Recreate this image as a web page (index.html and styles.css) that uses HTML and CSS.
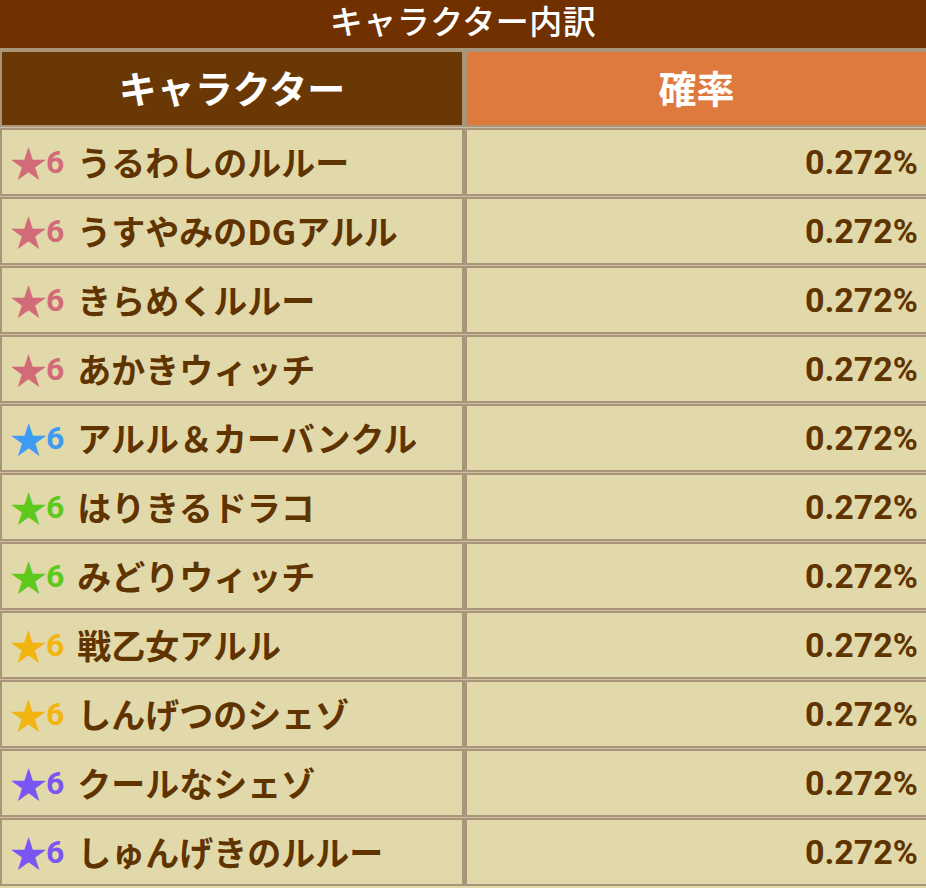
FILE: index.html
```html
<!DOCTYPE html>
<html lang="ja">
<head>
<meta charset="utf-8">
<link rel="stylesheet" href="styles.css">
</head>
<body>
<div class="title">キャラクター内訳</div>
<div class="table">
  <div class="row head">
    <div class="cell name-h">キャラクター</div>
    <div class="cell rate-h">確率</div>
  </div>
  <div class="row"><div class="cell name"><span class="rank pink"><span class="star">★</span>6</span><span class="label">うるわしのルルー</span></div><div class="cell rate">0.272%</div></div>
  <div class="row"><div class="cell name"><span class="rank pink"><span class="star">★</span>6</span><span class="label">うすやみのDGアルル</span></div><div class="cell rate">0.272%</div></div>
  <div class="row"><div class="cell name"><span class="rank pink"><span class="star">★</span>6</span><span class="label">きらめくルルー</span></div><div class="cell rate">0.272%</div></div>
  <div class="row"><div class="cell name"><span class="rank pink"><span class="star">★</span>6</span><span class="label">あかきウィッチ</span></div><div class="cell rate">0.272%</div></div>
  <div class="row"><div class="cell name"><span class="rank blue"><span class="star">★</span>6</span><span class="label">アルル＆カーバンクル</span></div><div class="cell rate">0.272%</div></div>
  <div class="row"><div class="cell name"><span class="rank green"><span class="star">★</span>6</span><span class="label">はりきるドラコ</span></div><div class="cell rate">0.272%</div></div>
  <div class="row"><div class="cell name"><span class="rank green"><span class="star">★</span>6</span><span class="label">みどりウィッチ</span></div><div class="cell rate">0.272%</div></div>
  <div class="row"><div class="cell name"><span class="rank yellow"><span class="star">★</span>6</span><span class="label">戦乙女アルル</span></div><div class="cell rate">0.272%</div></div>
  <div class="row"><div class="cell name"><span class="rank yellow"><span class="star">★</span>6</span><span class="label">しんげつのシェゾ</span></div><div class="cell rate">0.272%</div></div>
  <div class="row"><div class="cell name"><span class="rank purple"><span class="star">★</span>6</span><span class="label">クールなシェゾ</span></div><div class="cell rate">0.272%</div></div>
  <div class="row"><div class="cell name"><span class="rank purple"><span class="star">★</span>6</span><span class="label">しゅんげきのルルー</span></div><div class="cell rate">0.272%</div></div>
</div>
</body>
</html>
```
FILE: styles.css
```css
html, body {
  margin: 0;
  padding: 0;
  background: #e2d9ab;
}
body {
  width: 926px;
  height: 888px;
  overflow: hidden;
  font-family: "Noto Sans CJK JP", "Noto Sans", sans-serif;
}
.title {
  height: 50px;
  background: #703000;
  color: #ffffff;
  font-size: 33px;
  font-weight: 500;
  line-height: 1;
  padding-top: 4px;
  text-align: center;
  letter-spacing: 0.5px;
  box-sizing: border-box;
  border-bottom: 2px solid #a8957a;
}
.table {
  display: flex;
  flex-direction: column;
  gap: 1px;
  background: #cdbf9f;
}
.row {
  display: grid;
  grid-template-columns: 460px 459px;
  column-gap: 5px;
  height: 68px;
  flex-shrink: 0;
  box-sizing: border-box;
  border-top: 2px solid #a8957a;
  border-bottom: 2px solid #a8957a;
  border-left: 2px solid #a8957a;
  background: #a8957a;
}
.row.head {
  height: 77px;
}
.cell {
  display: flex;
  align-items: center;
  background: #e2d9ab;
  color: #5f3400;
  font-weight: 700;
}
.name-h, .rate-h {
  justify-content: center;
  color: #ffffff;
  font-size: 38px;
  padding-bottom: 4px;
}
.name-h {
  background: #6a3804;
}
.rate-h {
  background: #df7a3e;
}
.name {
  padding-left: 8px;
  font-size: 34px;
}
.rank {
  display: inline-flex;
  align-items: center;
  margin-right: 13px;
  font-family: Roboto, "Noto Sans", sans-serif;
  font-size: 32px;
  font-weight: 700;
}
.star {
  font-family: "Noto Sans CJK JP", sans-serif;
  font-size: 37px;
  font-weight: 400;
  margin-right: -1px;
}
.pink { color: #d26b78; }
.blue { color: #3d9bf2; }
.green { color: #5ec81d; }
.yellow { color: #f2b411; }
.purple { color: #7b55f1; }
.label {
  padding-bottom: 2px;
}
.rate {
  justify-content: flex-end;
  padding-right: 8px;
  font-family: Roboto, "Noto Sans", sans-serif;
  font-size: 34px;
  font-weight: 700;
}
```
